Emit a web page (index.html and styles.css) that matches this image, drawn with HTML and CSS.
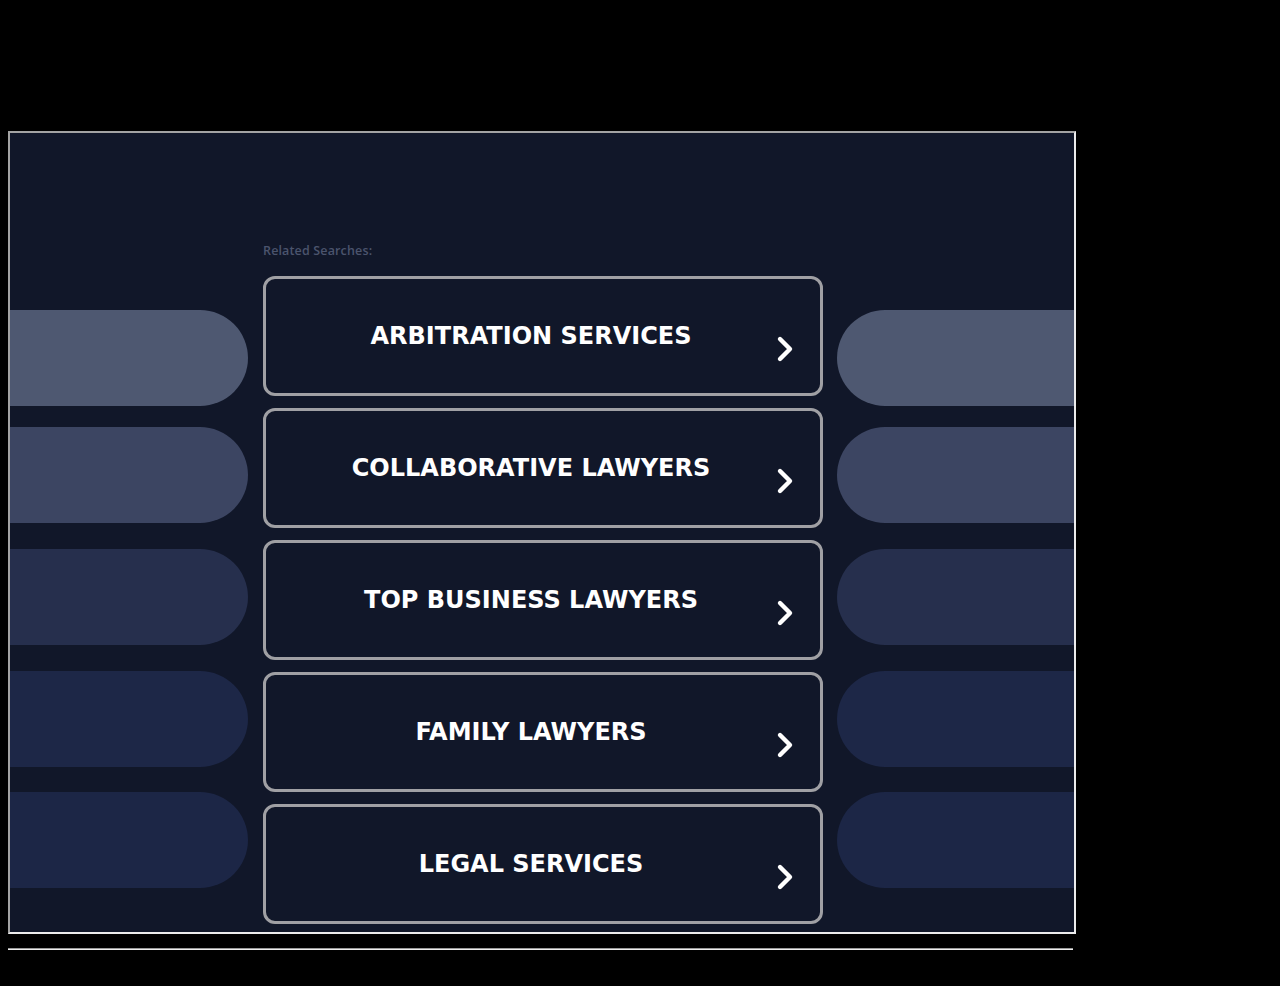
FILE: index.html
```html
<!DOCTYPE html>
<html>
<head>
<meta charset="utf-8">
<link rel="stylesheet" href="styles.css">
</head>
<body>
<div class="page">
  <div class="frame">
    <div class="side side-left">
      <div class="pill p1"></div>
      <div class="pill p2"></div>
      <div class="pill p3"></div>
      <div class="pill p4"></div>
      <div class="pill p5"></div>
    </div>
    <div class="center">
      <div class="label">Related Searches:</div>
      <div class="cards">
        <a class="card"><span class="title">ARBITRATION SERVICES</span><svg class="chev" viewBox="0 0 20 30"><polyline points="5,5 15,15 5,25"/></svg></a>
        <a class="card"><span class="title">COLLABORATIVE LAWYERS</span><svg class="chev" viewBox="0 0 20 30"><polyline points="5,5 15,15 5,25"/></svg></a>
        <a class="card"><span class="title">TOP BUSINESS LAWYERS</span><svg class="chev" viewBox="0 0 20 30"><polyline points="5,5 15,15 5,25"/></svg></a>
        <a class="card"><span class="title">FAMILY LAWYERS</span><svg class="chev" viewBox="0 0 20 30"><polyline points="5,5 15,15 5,25"/></svg></a>
        <a class="card"><span class="title">LEGAL SERVICES</span><svg class="chev" viewBox="0 0 20 30"><polyline points="5,5 15,15 5,25"/></svg></a>
      </div>
    </div>
    <div class="side side-right">
      <div class="pill p1"></div>
      <div class="pill p2"></div>
      <div class="pill p3"></div>
      <div class="pill p4"></div>
      <div class="pill p5"></div>
    </div>
  </div>
  <div class="rule"></div>
</div>
</body>
</html>
```
FILE: styles.css
```css
html, body {
  margin: 0;
  padding: 0;
  background: #000;
}
body {
  padding: 131px 8px 0 8px;
}
.page {
  width: 1068px;
}
.frame {
  box-sizing: border-box;
  width: 1068px;
  height: 803px;
  border: 2px solid;
  border-color: #a3a3a3 #ececec #ececec #a3a3a3;
  background: #111729;
  display: flex;
  gap: 15px;
  overflow: hidden;
}
.side {
  width: 238px;
  flex: none;
  display: flex;
  flex-direction: column;
  padding-top: 177px;
}
.side-right {
  width: 238px;
  margin-left: -1px;
}
.pill {
  height: 96px;
  flex: none;
}
.side-left .pill {
  border-radius: 0 48px 48px 0;
}
.side-right .pill {
  border-radius: 48px 0 0 48px;
}
.pill.p1 { background: #4e5871; }
.pill.p2 { background: #3c4562; margin-top: 21px; }
.pill.p3 { background: #262f4d; margin-top: 26px; }
.pill.p4 { background: #1d2747; margin-top: 26px; }
.pill.p5 { background: #1c2646; margin-top: 25px; }
.center {
  width: 560px;
  flex: none;
  padding-top: 110px;
}
.label {
  font-family: "Open Sans", "Lato", sans-serif;
  font-weight: 600;
  font-size: 12.5px;
  letter-spacing: 0.15px;
  color: #4b546d;
  line-height: 16px;
  height: 33px;
}
.cards {
  display: flex;
  flex-direction: column;
  gap: 12px;
}
.card {
  box-sizing: border-box;
  height: 120px;
  border: 3px solid #a0a0a4;
  border-radius: 12px;
  display: flex;
  align-items: center;
  justify-content: center;
  position: relative;
  padding-right: 24px;
}
.title {
  font-family: "DejaVu Sans", sans-serif;
  font-weight: 700;
  font-size: 24px;
  color: #fff;
  letter-spacing: 0;
  white-space: nowrap;
}
.chev {
  position: absolute;
  left: 509px;
  top: 55px;
  width: 20px;
  height: 30px;
  fill: none;
  stroke: #fff;
  stroke-width: 4.4;
  stroke-linecap: round;
  stroke-linejoin: round;
}
.rule {
  width: 1065px;
  height: 0;
  border-top: 1px solid #9a9a9a;
  border-bottom: 1px solid #eeeeee;
  margin-top: 14px;
}
```
